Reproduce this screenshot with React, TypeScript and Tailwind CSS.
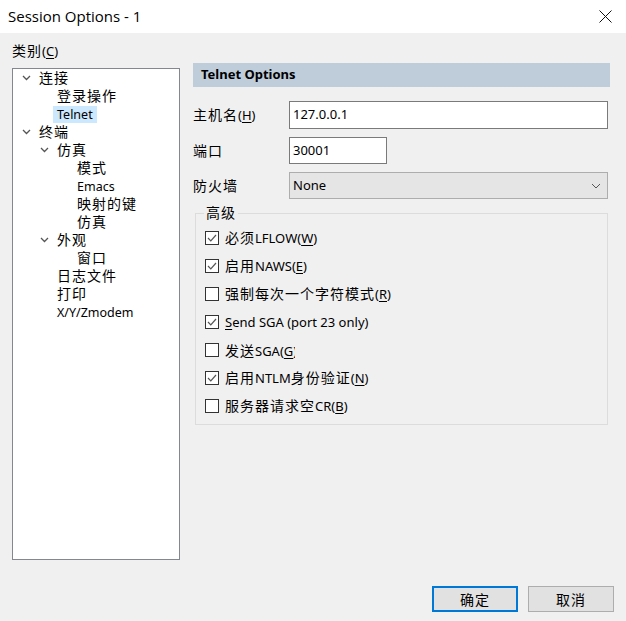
import React from "react";

const FONT = '"Noto Sans", "Noto Sans CJK SC", sans-serif';

function C({ children }: { children: React.ReactNode }) {
  return <span className="text-[14px] tracking-[1px]">{children}</span>;
}

function Chevron() {
  return (
    <svg width="9" height="6" viewBox="0 0 9 6" className="shrink-0">
      <polyline points="1,1 4.5,4.5 8,1" fill="none" stroke="#555" strokeWidth="1.3" />
    </svg>
  );
}

type Item = { label: React.ReactNode; indent: number; chevron?: boolean; selected?: boolean };

const items: Item[] = [
  { label: <C>连接</C>, indent: 39, chevron: true },
  { label: <C>登录操作</C>, indent: 57 },
  { label: <span className="text-[12.5px]">Telnet</span>, indent: 57, selected: true },
  { label: <C>终端</C>, indent: 39, chevron: true },
  { label: <C>仿真</C>, indent: 57, chevron: true },
  { label: <C>模式</C>, indent: 77 },
  { label: <span className="text-[12.5px]">Emacs</span>, indent: 77 },
  { label: <C>映射的键</C>, indent: 77 },
  { label: <C>仿真</C>, indent: 77 },
  { label: <C>外观</C>, indent: 57, chevron: true },
  { label: <C>窗口</C>, indent: 77 },
  { label: <C>日志文件</C>, indent: 57 },
  { label: <C>打印</C>, indent: 57 },
  { label: <span className="text-[12.5px]">X/Y/Zmodem</span>, indent: 57 },
];

function Check({ checked }: { checked: boolean }) {
  return (
    <div className="w-[14px] h-[14px] border border-[#333] bg-white flex items-center justify-center shrink-0">
      {checked && (
        <svg width="10" height="8" viewBox="0 0 10 8">
          <polyline points="1,4 3.8,6.8 9,1" fill="none" stroke="#555" strokeWidth="1.2" />
        </svg>
      )}
    </div>
  );
}

function U({ children }: { children: React.ReactNode }) {
  return <span className="underline underline-offset-2">{children}</span>;
}

const checks: { checked: boolean; label: React.ReactNode }[] = [
  { checked: true, label: <><C>必须</C>LFLOW(<U>W</U>)</> },
  { checked: true, label: <><C>启用</C>NAWS(<U>E</U>)</> },
  { checked: false, label: <><C>强制每次一个字符模式</C>(<U>R</U>)</> },
  { checked: true, label: <><U>S</U>end SGA (port 23 only)</> },
  {
    checked: false,
    label: (
      <span className="inline-block w-[70px] overflow-hidden whitespace-nowrap align-middle">
        <C>发送</C>SGA(<U>G</U>)
      </span>
    ),
  },
  { checked: true, label: <><C>启用</C>NTLM<C>身份验证</C>(<U>N</U>)</> },
  { checked: false, label: <><C>服务器请求空</C>CR(<U>B</U>)</> },
];

export default function App() {
  return (
    <div
      className="w-[626px] h-[621px] flex flex-col bg-[#f0f0f0] text-black text-[13px] overflow-hidden"
      style={{ fontFamily: FONT }}
    >
      {/* Title bar */}
      <div className="h-[33px] bg-white flex items-center justify-between pl-[8px] pr-[14px] shrink-0">
        <span className="text-[15px] text-black" style={{ fontFamily: '"Open Sans", sans-serif' }}>
          Session Options - 1
        </span>
        <svg width="13" height="13" viewBox="0 0 13 13">
          <line x1="0.5" y1="0.5" x2="12.5" y2="12.5" stroke="#111" strokeWidth="1" />
          <line x1="12.5" y1="0.5" x2="0.5" y2="12.5" stroke="#111" strokeWidth="1" />
        </svg>
      </div>

      {/* Body */}
      <div className="flex-1 flex flex-col">
        <div className="flex">
          {/* Left column */}
          <div className="ml-[12px] w-[168px] pt-[9px] flex flex-col">
            <div className="h-[18px] leading-[18px]">
              <C>类别</C>(<U>C</U>)
            </div>
            <div className="mt-[8px] h-[492px] bg-white border border-[#828790]">
              {items.map((it, i) => (
                <div key={i} className="h-[18px] flex items-center relative" style={{ paddingLeft: it.indent - 13 }}>
                  {it.chevron && (
                    <div className="absolute top-[6px]" style={{ left: it.indent - 30 }}>
                      <Chevron />
                    </div>
                  )}
                  {it.selected ? (
                    <span className="bg-[#cce8ff] h-[17px] leading-[17px] px-[4px] -ml-[4px]">{it.label}</span>
                  ) : (
                    <span className="leading-[18px]">{it.label}</span>
                  )}
                </div>
              ))}
            </div>
          </div>

          {/* Right column */}
          <div className="ml-[13px] w-[417px] pt-[30px] flex flex-col">
            <div className="h-[24px] bg-[#bfcddb] flex items-center pl-[8px] font-bold text-[13px]">
              Telnet Options
            </div>

            <div className="mt-[14px] flex items-center h-[28px]">
              <div className="w-[96px]">
                <C>主机名</C>(<U>H</U>)
              </div>
              <div className="w-[319px] h-[28px] bg-white border border-[#7a7a7a] flex items-center pl-[3px]">
                127.0.0.1
              </div>
            </div>

            <div className="mt-[8px] flex items-center h-[27px]">
              <div className="w-[96px]">
                <C>端口</C>
              </div>
              <div className="w-[98px] h-[27px] bg-white border border-[#7a7a7a] flex items-center pl-[3px]">
                30001
              </div>
            </div>

            <div className="mt-[8px] flex items-center h-[27px]">
              <div className="w-[96px]">
                <C>防火墙</C>
              </div>
              <div className="w-[319px] h-[27px] bg-[#e5e5e5] border border-[#adadad] flex items-center justify-between pl-[3px] pr-[6px]">
                <span>None</span>
                <svg width="10" height="6" viewBox="0 0 10 6">
                  <polyline points="1,1 5,5 9,1" fill="none" stroke="#555" strokeWidth="1" />
                </svg>
              </div>
            </div>

            {/* Group box */}
            <div className="mt-[14px] ml-[2px] w-[413px] h-[212px] border border-[#dcdcdc] relative pt-[10px] pl-[9px]">
              <div className="absolute -top-[10px] left-[8px] bg-[#f0f0f0] px-[2px] leading-[18px]">
                <C>高级</C>
              </div>
              {checks.map((c, i) => (
                <div key={i} className="h-[28px] flex items-center gap-[6px]">
                  <Check checked={c.checked} />
                  <span className="leading-[18px] whitespace-nowrap">{c.label}</span>
                </div>
              ))}
            </div>
          </div>
        </div>

        {/* Footer buttons */}
        <div className="mt-auto flex justify-end gap-[10px] pr-[12px] pb-[9px]">
          <button className="w-[86px] h-[26px] bg-[#e1e1e1] border-2 border-[#0078d7] flex items-center justify-center">
            <C>确定</C>
          </button>
          <button className="w-[86px] h-[26px] bg-[#e1e1e1] border border-[#adadad] flex items-center justify-center">
            <C>取消</C>
          </button>
        </div>
      </div>
    </div>
  );
}
